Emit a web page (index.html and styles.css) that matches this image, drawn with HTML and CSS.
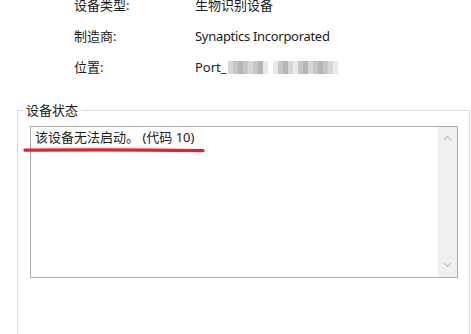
FILE: index.html
```html
<!DOCTYPE html>
<html lang="zh-CN">
<head>
<meta charset="utf-8">
<title>设备属性</title>
<link rel="stylesheet" href="styles.css">
</head>
<body>
<div class="page">
  <dl class="props">
    <div class="row"><dt>设备类型:</dt><dd>生物识别设备</dd></div>
    <div class="row"><dt>制造商:</dt><dd class="latin">Synaptics Incorporated</dd></div>
    <div class="row"><dt>位置:</dt><dd class="loc">Port_<span class="redact"><i class="s2"></i><i class="s3"></i><i class="s4"></i><i class="s3"></i><i class="s2"></i><i class="s3"></i><i class="s4"></i><i class="s1"></i><i class="s0"></i><i class="s1"></i><i class="s3"></i><i class="s4"></i><i class="s2"></i><i class="s1"></i><i class="s3"></i><i class="s4"></i><i class="s2"></i><i class="s3"></i><i class="s4"></i><i class="s3"></i><i class="s2"></i><i class="s1"></i></span></dd></div>
  </dl>
  <fieldset class="group">
    <legend>设备状态</legend>
    <div class="status">
      <div class="status-text">该设备无法启动。 (代码 10)</div>
      <div class="scrollbar">
        <svg class="arrow" width="9" height="6" viewBox="0 0 9 6"><path d="M1 5 L4.5 1.5 L8 5" fill="none" stroke="#c2c2c2" stroke-width="1.2"/></svg>
        <svg class="arrow" width="9" height="6" viewBox="0 0 9 6"><path d="M1 1 L4.5 4.5 L8 1" fill="none" stroke="#c2c2c2" stroke-width="1.2"/></svg>
      </div>
      <svg class="underline" width="184" height="8" viewBox="0 0 184 8"><path d="M2 4.2 Q 90 3.2 180 4.6" fill="none" stroke="#e3202b" stroke-width="3.2" stroke-linecap="round"/></svg>
    </div>
  </fieldset>
</div>
</body>
</html>
```
FILE: styles.css
```css
html, body {
  margin: 0;
  padding: 0;
  background: #ffffff;
}
body {
  font-family: "Noto Sans", "Noto Sans CJK SC", sans-serif;
  font-size: 13px;
  color: #1a1a1a;
  overflow: hidden;
}
.page {
  width: 471px;
  height: 334px;
  overflow: hidden;
}
.props {
  margin: -10px 0 0 0;
  padding-left: 74px;
}
.row {
  display: grid;
  grid-template-columns: 121px auto;
  height: 31px;
  align-items: center;
}
.row dt, .row dd {
  margin: 0;
  line-height: 17px;
}
.row .latin {
  letter-spacing: -0.3px;
}
.loc {
  display: flex;
  align-items: center;
}
.redact {
  display: flex;
  height: 13px;
  margin-left: 1px;
}
.redact i {
  display: block;
  width: 5px;
  height: 13px;
}
.redact .s0 { background: #fdfdfd; }
.redact .s1 { background: #e9e9e9; }
.redact .s2 { background: #d6d6d6; }
.redact .s3 { background: #c6c6c6; }
.redact .s4 { background: #b5b5b5; }
.group {
  margin: 18px 1px 0 17px;
  border: 1px solid #dcdcdc;
  padding: 7px 11px 80px 12px;
  min-width: 0;
}
.group legend {
  margin-left: -7px;
  padding: 0 3px;
  line-height: 18px;
}
.status {
  position: relative;
  display: flex;
  height: 152px;
  box-sizing: border-box;
  border: 1px solid #acacac;
  background: #fff;
}
.status-text {
  flex: 1;
  padding: 2px 4px;
  line-height: 17px;
}
.scrollbar {
  width: 19px;
  background: #f0f0f0;
  display: flex;
  flex-direction: column;
  justify-content: space-between;
  align-items: center;
  padding: 8px 0 9px;
}
.arrow {
  display: block;
}
.underline {
  position: absolute;
  left: -8px;
  top: 19px;
}
```
